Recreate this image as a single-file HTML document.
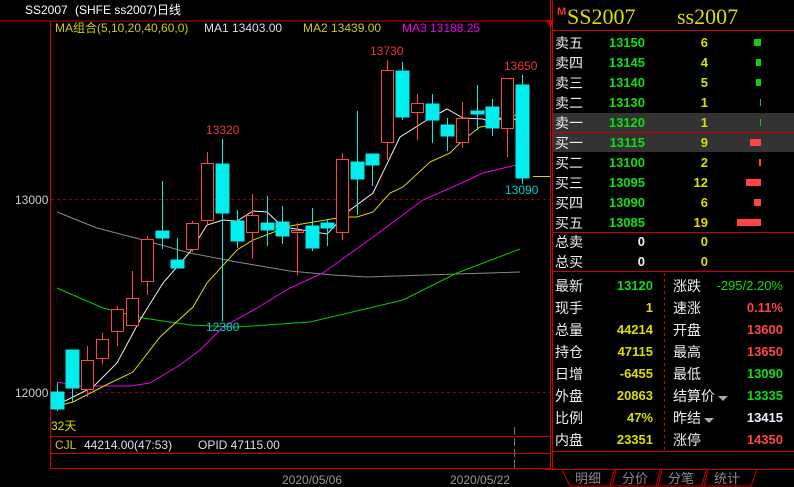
<!DOCTYPE html>
<html><head><meta charset="utf-8"><style>
html,body{margin:0;padding:0;background:#000;width:794px;height:487px;overflow:hidden}
svg{display:block}
text{font-family:"Liberation Sans","Noto Sans CJK SC",sans-serif}
</style></head><body>
<svg width="794" height="487" viewBox="0 0 794 487" xmlns="http://www.w3.org/2000/svg">
<rect width="794" height="487" fill="#000"/>
<!-- header -->
<text x="25" y="14" fill="#fff" font-size="12">SS2007</text>
<text x="75" y="14" fill="#fff" font-size="12">(SHFE ss2007)日线</text>
<line x1="0" y1="21" x2="550" y2="21" stroke="#c00" />
<line x1="50.5" y1="21" x2="50.5" y2="469" stroke="#c00"/>
<line x1="550.5" y1="0" x2="550.5" y2="469" stroke="#c00"/>
<text x="55" y="32" font-size="12" fill="#cc0">MA组合(5,10,20,40,60,0)</text>
<text x="204" y="32" font-size="12" fill="#dde">MA1 13403.00</text>
<text x="303" y="32" font-size="12" fill="#cc0">MA2 13439.00</text>
<text x="402" y="32" font-size="12" fill="#e0e">MA3 13188.25</text>
<!-- grid -->
<line x1="51" y1="199.5" x2="550" y2="199.5" stroke="#900" stroke-dasharray="3,3"/>
<line x1="51" y1="392.5" x2="550" y2="392.5" stroke="#900" stroke-dasharray="3,3"/>
<text x="15" y="204" font-size="12" fill="#ccc">13000</text>
<text x="15" y="397" font-size="12" fill="#ccc">12000</text>
<!-- MA lines -->
<g fill="none" stroke-width="1">
<polyline stroke="#888" points="57,212 97,228 143,240 190,253 237,262 290,271 333,275 367,277 457,274 520,272"/>
<polyline stroke="#0c0" points="57,288 103,308 143,318 190,325 237,327 310,322 403,300 457,273 520,249"/>
<polyline stroke="#e0e" points="57,382 80,386 130,386 150,383 180,365 200,350 223,327 257,308 290,288 323,273 373,237 423,200 457,185 483,173 520,164"/>
<polyline stroke="#dd0" points="57,406 73,402 110,383 133,372 160,337 193,307 207,283 237,250 253,240 290,226 343,217 357,217 373,212 390,193 403,187 430,162 450,153 463,140 480,127 493,125 507,114 520,116"/>
<polyline stroke="#eee" points="57,405 93,387 117,363 140,320 163,283 190,252 207,225 223,220 237,221 253,211 267,212 283,227 290,228 327,234 350,210 373,193 400,137 427,120 447,109 463,118 483,119 493,123 507,114 520,123"/>
</g>
<line x1="533" y1="176.5" x2="550" y2="176.5" stroke="#dd0"/>
<!-- candles -->
<g stroke-width="1">
<g stroke="#0ee" fill="#0ee">
<line x1="57.5" y1="383" x2="57.5" y2="411"/><rect x="51" y="392" width="13" height="17"/>
<line x1="72.5" y1="350" x2="72.5" y2="402"/><rect x="66" y="350" width="13" height="38"/>
<line x1="162.5" y1="181" x2="162.5" y2="249"/><rect x="156" y="231" width="13" height="7"/>
<line x1="177.5" y1="238" x2="177.5" y2="268"/><rect x="171" y="260" width="13" height="8"/>
<line x1="222.5" y1="139" x2="222.5" y2="321"/><rect x="216" y="164" width="13" height="49"/>
<line x1="237.5" y1="210" x2="237.5" y2="248"/><rect x="231" y="221" width="13" height="20"/>
<line x1="267.5" y1="196" x2="267.5" y2="246"/><rect x="261" y="223" width="13" height="7"/>
<line x1="282.5" y1="206" x2="282.5" y2="244"/><rect x="276" y="222" width="13" height="14"/>
<line x1="312.5" y1="208" x2="312.5" y2="251"/><rect x="306" y="226" width="13" height="22"/>
<line x1="327.5" y1="219" x2="327.5" y2="246"/><rect x="321" y="223" width="13" height="5"/>
<line x1="357.5" y1="111" x2="357.5" y2="215"/><rect x="351" y="162" width="13" height="17"/>
<line x1="372.5" y1="154" x2="372.5" y2="186"/><rect x="366" y="154" width="13" height="11"/>
<line x1="402.5" y1="62" x2="402.5" y2="120"/><rect x="396" y="71" width="13" height="46"/>
<line x1="432.5" y1="94" x2="432.5" y2="143"/><rect x="426" y="104" width="13" height="16"/>
<line x1="447.5" y1="118" x2="447.5" y2="151"/><rect x="441" y="125" width="13" height="11"/>
<line x1="477.5" y1="85" x2="477.5" y2="130"/><rect x="471" y="111" width="13" height="3"/>
<line x1="492.5" y1="99" x2="492.5" y2="136"/><rect x="486" y="107" width="13" height="21"/>
<line x1="522.5" y1="75" x2="522.5" y2="184"/><rect x="516" y="85" width="13" height="93"/>
</g>
<g stroke="#f44" fill="#000">
<line x1="87.5" y1="346" x2="87.5" y2="397"/><rect x="81.5" y="360.5" width="12" height="29"/>
<line x1="102.5" y1="333" x2="102.5" y2="364"/><rect x="96.5" y="339.5" width="12" height="19"/>
<line x1="117.5" y1="306" x2="117.5" y2="346"/><rect x="111.5" y="309.5" width="12" height="22"/>
<line x1="132.5" y1="271" x2="132.5" y2="325"/><rect x="126.5" y="298.5" width="12" height="27"/>
<line x1="147.5" y1="236" x2="147.5" y2="295"/><rect x="141.5" y="239.5" width="12" height="42"/>
<line x1="192.5" y1="221" x2="192.5" y2="252"/><rect x="186.5" y="223.5" width="12" height="26"/>
<line x1="207.5" y1="152" x2="207.5" y2="226"/><rect x="201.5" y="163.5" width="12" height="57"/>
<line x1="252.5" y1="194" x2="252.5" y2="259"/><rect x="246.5" y="215.5" width="12" height="17"/>
<line x1="297.5" y1="223" x2="297.5" y2="275"/><rect x="291.5" y="230.5" width="12" height="2"/>
<line x1="342.5" y1="153" x2="342.5" y2="240"/><rect x="336.5" y="159.5" width="12" height="73"/>
<line x1="387.5" y1="60" x2="387.5" y2="160"/><rect x="381.5" y="70.5" width="12" height="72"/>
<line x1="417.5" y1="94" x2="417.5" y2="140"/><rect x="411.5" y="103.5" width="12" height="9"/>
<line x1="462.5" y1="102" x2="462.5" y2="148"/><rect x="456.5" y="118.5" width="12" height="24"/>
<line x1="507.5" y1="78" x2="507.5" y2="157"/><rect x="501.5" y="78.5" width="12" height="50"/>
</g>
</g>
<text x="370" y="55" font-size="12" fill="#e33">13730</text>
<text x="504" y="70" font-size="12" fill="#e33">13650</text>
<text x="206" y="134" font-size="12" fill="#e33">13320</text>
<text x="206" y="331" font-size="12" fill="#0cc">12380</text>
<text x="505" y="194" font-size="12" fill="#0cc">13090</text>
<text x="51" y="430" font-size="12" fill="#dd0">32天</text>
<!-- volume panel -->
<line x1="50" y1="436.5" x2="550" y2="436.5" stroke="#c00"/>
<line x1="50" y1="453.5" x2="550" y2="453.5" stroke="#c00"/>
<line x1="50" y1="468.5" x2="550" y2="468.5" stroke="#c00"/>
<line x1="514.5" y1="427" x2="514.5" y2="468" stroke="#777" stroke-dasharray="8,3"/>
<text x="55" y="449" font-size="12" fill="#cc0">CJL</text>
<text x="84" y="449" font-size="12" fill="#dde">44214.00(47:53)</text>
<text x="198" y="449" font-size="12" fill="#dde">OPID 47115.00</text>
<text x="282" y="484" font-size="12" fill="#999">2020/05/06</text>
<text x="450" y="484" font-size="12" fill="#999">2020/05/22</text>
<!-- right panel -->
<line x1="552.5" y1="0" x2="552.5" y2="469" stroke="#c00"/>
<polygon points="545,20 552,20 552,27" fill="#c00"/>
<line x1="552" y1="30.5" x2="794" y2="30.5" stroke="#c00"/>
<text x="557" y="15" font-size="11" font-weight="bold" fill="#e33">M</text>
<text x="567" y="24" font-size="22" fill="#dd0" style="font-family:'Liberation Serif',serif">SS2007</text>
<text x="677" y="24" font-size="22" fill="#dd0" style="font-family:'Liberation Serif',serif">ss2007</text>
<rect x="553" y="113" width="241" height="19" fill="#333"/>
<rect x="553" y="133" width="241" height="19" fill="#333"/>
<line x1="552" y1="132.5" x2="794" y2="132.5" stroke="#c00"/>
<line x1="552" y1="232.5" x2="794" y2="232.5" stroke="#c00"/>
<line x1="552" y1="271.5" x2="794" y2="271.5" stroke="#c00"/>
<g font-size="14" fill="#eee">
<text x="555" y="48">卖五</text><text x="555" y="68">卖四</text><text x="555" y="88">卖三</text><text x="555" y="108">卖二</text><text x="555" y="128">卖一</text>
<text x="555" y="148">买一</text><text x="555" y="168">买二</text><text x="555" y="188">买三</text><text x="555" y="208">买四</text><text x="555" y="228">买五</text>
<text x="555" y="247">总卖</text><text x="555" y="267">总买</text>
</g>
<g font-size="13" font-weight="bold" fill="#1d1" text-anchor="end">
<text x="645" y="47">13150</text><text x="645" y="67">13145</text><text x="645" y="87">13140</text><text x="645" y="107">13130</text><text x="645" y="127">13120</text>
<text x="645" y="147">13115</text><text x="645" y="167">13100</text><text x="645" y="187">13095</text><text x="645" y="207">13090</text><text x="645" y="227">13085</text>
</g>
<g font-size="13" font-weight="bold" fill="#dd0" text-anchor="end">
<text x="708" y="47">6</text><text x="708" y="67">4</text><text x="708" y="87">5</text><text x="708" y="107">1</text><text x="708" y="127">1</text>
<text x="708" y="147">9</text><text x="708" y="167">2</text><text x="708" y="187">12</text><text x="708" y="207">6</text><text x="708" y="227">19</text>
<text x="708" y="246">0</text><text x="708" y="266">0</text>
</g>
<g font-size="13" font-weight="bold" fill="#eef" text-anchor="end">
<text x="645" y="246">0</text><text x="645" y="266">0</text>
</g>
<g fill="#1c1">
<rect x="754" y="39" width="7" height="7"/><rect x="756" y="59" width="5" height="7"/><rect x="756" y="79" width="5" height="7"/>
<rect x="760" y="99" width="1" height="7"/><rect x="760" y="119" width="1" height="7"/>
</g>
<g fill="#f44">
<rect x="750" y="139" width="11" height="7"/><rect x="759" y="159" width="2" height="7"/><rect x="746" y="179" width="15" height="7"/>
<rect x="754" y="199" width="7" height="7"/><rect x="737" y="219" width="24" height="7"/>
</g>
<!-- stats -->
<line x1="664.5" y1="273" x2="664.5" y2="451" stroke="#c00" stroke-dasharray="3,3"/>
<g font-size="14" fill="#eee">
<text x="555" y="291">最新</text><text x="555" y="313">现手</text><text x="555" y="335">总量</text><text x="555" y="357">持仓</text>
<text x="555" y="379">日增</text><text x="555" y="401">外盘</text><text x="555" y="423">比例</text><text x="555" y="445">内盘</text>
<text x="673" y="291">涨跌</text><text x="673" y="313">速涨</text><text x="673" y="335">开盘</text><text x="673" y="357">最高</text>
<text x="673" y="379">最低</text><text x="673" y="401">结算价</text><text x="673" y="423">昨结</text><text x="673" y="445">涨停</text>
</g>
<polygon points="718,396 728,396 723,401" fill="#aaa"/>
<polygon points="704,418 714,418 709,423" fill="#aaa"/>
<g font-size="13" font-weight="bold" text-anchor="end">
<text x="653" y="290" fill="#1d1">13120</text>
<text x="653" y="312" fill="#dd0">1</text>
<text x="653" y="334" fill="#dd0">44214</text>
<text x="653" y="356" fill="#dd0">47115</text>
<text x="653" y="378" fill="#dd0">-6455</text>
<text x="653" y="400" fill="#dd0">20863</text>
<text x="653" y="422" fill="#dd0">47%</text>
<text x="653" y="444" fill="#dd0">23351</text>
<text x="783" y="290" fill="#1d1" font-weight="normal">-295/2.20%</text>
<text x="783" y="312" fill="#f44">0.11%</text>
<text x="783" y="334" fill="#f44">13600</text>
<text x="783" y="356" fill="#f44">13650</text>
<text x="783" y="378" fill="#1d1">13090</text>
<text x="783" y="400" fill="#1d1">13335</text>
<text x="783" y="422" fill="#eef">13415</text>
<text x="783" y="444" fill="#f44">14350</text>
</g>
<line x1="552" y1="451.5" x2="794" y2="451.5" stroke="#c00"/>
<!-- tabs -->
<line x1="545" y1="469.5" x2="794" y2="469.5" stroke="#c00"/>
<g fill="none" stroke="#c00">
<polyline points="562,470 570,486 612,486 616,470"/>
<polyline points="612,486 658,486 662,470"/>
<polyline points="610,486 614,470"/>
<polyline points="658,486 704,486 708,470"/>
<polyline points="656,486 660,470"/>
<polyline points="704,486 751,486 757,470"/>
<polyline points="702,486 706,470"/>
</g>
<text x="575" y="483" font-size="13" fill="#888">明细</text>
<text x="622" y="483" font-size="13" fill="#888">分价</text>
<text x="668" y="483" font-size="13" fill="#888">分笔</text>
<text x="714" y="483" font-size="13" fill="#888">统计</text>
</svg>
</body></html>
